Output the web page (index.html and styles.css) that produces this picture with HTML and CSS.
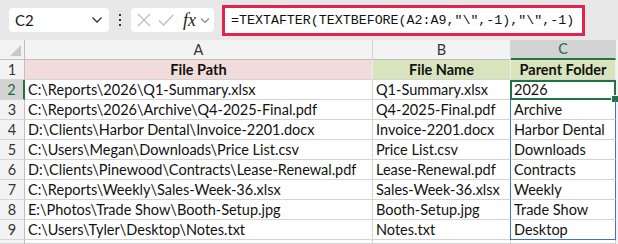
FILE: index.html
```html
<!DOCTYPE html>
<html lang="en">

<head>
    <meta charset="UTF-8">
    <meta name="viewport" content="width=device-width, initial-scale=1.0">
    <title>TEXTAFTER TEXTBEFORE</title>
    <link rel="stylesheet" href="styles.css">
</head>

<body>
    <div class="toolbar">
        <div class="namebox">
            <span class="name">C2</span>
            <svg class="chev" width="12" height="8" viewBox="0 0 12 8"><path d="M1.5 1.5 L6 6 L10.5 1.5" fill="none" stroke="#333" stroke-width="1.3"/></svg>
        </div>
        <div class="dots"><i></i><i></i><i></i></div>
        <div class="funcbox">
            <svg width="14" height="14" viewBox="0 0 14 14"><path d="M1 1 L13 13 M13 1 L1 13" stroke="#bdbdbd" stroke-width="1.3"/></svg>
            <svg width="16" height="14" viewBox="0 0 16 14"><path d="M1 7.5 L5.5 12 L15 2" fill="none" stroke="#bdbdbd" stroke-width="1.3"/></svg>
            <span class="fx">fx</span>
            <svg width="10" height="7" viewBox="0 0 10 7"><path d="M1 1.5 L5 5.5 L9 1.5" fill="none" stroke="#888" stroke-width="1.2"/></svg>
        </div>
        <div class="formula">=TEXTAFTER(TEXTBEFORE(A2:A9,"\",-1),"\",-1)</div>
    </div>

    <div class="sheet">
        <div class="corner"></div>
        <div class="colhead">A</div>
        <div class="colhead">B</div>
        <div class="colhead sel">C</div>
        <div class="edge"></div>

        <div class="rowhead">1</div>
        <div class="cell title pink">File Path</div>
        <div class="cell title green">File Name</div>
        <div class="cell title green">Parent Folder</div>
        <div class="edge"></div>

        <div class="rowhead sel">2</div>
        <div class="cell">C:\Reports\2026\Q1-Summary.xlsx</div>
        <div class="cell">Q1-Summary.xlsx</div>
        <div class="cell spill active">2026<span class="handle"></span></div>
        <div class="edge"></div>

        <div class="rowhead">3</div>
        <div class="cell">C:\Reports\2026\Archive\Q4-2025-Final.pdf</div>
        <div class="cell">Q4-2025-Final.pdf</div>
        <div class="cell spill">Archive</div>
        <div class="edge"></div>

        <div class="rowhead">4</div>
        <div class="cell">D:\Clients\Harbor Dental\Invoice-2201.docx</div>
        <div class="cell">Invoice-2201.docx</div>
        <div class="cell spill">Harbor Dental</div>
        <div class="edge"></div>

        <div class="rowhead">5</div>
        <div class="cell">C:\Users\Megan\Downloads\Price List.csv</div>
        <div class="cell">Price List.csv</div>
        <div class="cell spill">Downloads</div>
        <div class="edge"></div>

        <div class="rowhead">6</div>
        <div class="cell">D:\Clients\Pinewood\Contracts\Lease-Renewal.pdf</div>
        <div class="cell">Lease-Renewal.pdf</div>
        <div class="cell spill">Contracts</div>
        <div class="edge"></div>

        <div class="rowhead">7</div>
        <div class="cell">C:\Reports\Weekly\Sales-Week-36.xlsx</div>
        <div class="cell">Sales-Week-36.xlsx</div>
        <div class="cell spill">Weekly</div>
        <div class="edge"></div>

        <div class="rowhead">8</div>
        <div class="cell">E:\Photos\Trade Show\Booth-Setup.jpg</div>
        <div class="cell">Booth-Setup.jpg</div>
        <div class="cell spill">Trade Show</div>
        <div class="edge"></div>

        <div class="rowhead">9</div>
        <div class="cell">C:\Users\Tyler\Desktop\Notes.txt</div>
        <div class="cell">Notes.txt</div>
        <div class="cell spill last">Desktop</div>
        <div class="edge"></div>

        <div class="rowhead"></div>
        <div class="cell"></div>
        <div class="cell"></div>
        <div class="cell"></div>
        <div class="edge"></div>
    </div>
</body>

</html>
```

FILE: styles.css
```css
html,
body {
    margin: 0;
    padding: 0;
    background: #ffffff;
    overflow: hidden;
}

body {
    font-family: "Lato", "Liberation Sans", sans-serif;
    font-size: 14.5px;
    color: #111;
}

.toolbar {
    height: 40px;
    background: #e8e8e8;
    display: flex;
    align-items: center;
    padding-left: 9px;
    box-sizing: border-box;
}

.namebox {
    width: 100px;
    height: 24px;
    background: #fff;
    border-radius: 4px;
    display: flex;
    align-items: center;
    justify-content: space-between;
    padding: 0 6px 0 6px;
    box-sizing: border-box;
}

.name {
    color: #1a1a1a;
    font-size: 15px;
}

.dots {
    width: 22px;
    display: flex;
    flex-direction: column;
    align-items: center;
    gap: 3px;
}

.dots i {
    width: 2px;
    height: 2px;
    background: #333;
}

.funcbox {
    width: 83px;
    height: 24px;
    background: #fff;
    border-radius: 4px;
    display: flex;
    align-items: center;
    gap: 7px;
    padding-left: 6px;
    box-sizing: border-box;
}

.fx {
    font-family: "Liberation Serif", serif;
    font-style: italic;
    font-size: 18px;
    color: #222;
    margin-left: 2px;
    margin-right: -3px;
}

.formula {
    margin-left: 8px;
    width: 363px;
    height: 31px;
    background: #fff;
    border: 3px solid #e3224d;
    box-sizing: border-box;
    font-family: "Liberation Mono", monospace;
    font-size: 13.3px;
    line-height: 25px;
    padding-left: 6px;
    color: #111;
    white-space: nowrap;
}

.sheet {
    display: grid;
    grid-template-columns: 25px 348px 138px 105px 2px;
    grid-template-rows: repeat(10, 20px) 4px;
}

.corner {
    background: #f3f3f3;
    border-right: 1px solid #bfbfbf;
    border-bottom: 1px solid #bfbfbf;
    position: relative;
}

.corner::after {
    content: "";
    position: absolute;
    right: 3px;
    bottom: 3px;
    border-left: 11px solid transparent;
    border-bottom: 11px solid #c8c8c8;
}

.colhead {
    background: #f3f3f3;
    border-right: 1px solid #d6d6d6;
    border-bottom: 1px solid #bfbfbf;
    text-align: center;
    line-height: 19px;
    color: #333;
}

.colhead.sel {
    background: #d3d3d3;
    color: #1e6b41;
    border-bottom: 2px solid #217346;
    line-height: 18px;
}

.edge {
    background: #f3f3f3;
}

.rowhead {
    background: #f3f3f3;
    border-right: 1px solid #bfbfbf;
    border-bottom: 1px solid #d6d6d6;
    text-align: center;
    line-height: 19px;
    color: #333;
}

.rowhead.sel {
    background: #d3d3d3;
    color: #1e6b41;
    border-right: 2px solid #217346;
}

.cell {
    border-right: 1px solid #d4d4d4;
    border-bottom: 1px solid #d4d4d4;
    padding-left: 3px;
    line-height: 19px;
    white-space: nowrap;
    overflow: visible;
    position: relative;
}

.title {
    font-weight: bold;
    text-align: center;
    padding-left: 0;
}

.pink {
    background: #f2dcdb;
    border-right-color: #eeeeee;
}

.green {
    background: #d8e4bc;
    border-right-color: #eeeeee;
}

.spill {
    border-left: 1px solid #4472c4;
    border-right: 1px solid #4472c4;
    margin-left: -1px;
}

.spill.last {
    border-bottom: 1px solid #4472c4;
}

.active {
    border: 2px solid #217346;
    line-height: 16px;
    padding-left: 2px;
}

.handle {
    position: absolute;
    right: -5px;
    bottom: -5px;
    width: 6px;
    height: 6px;
    background: #217346;
    border: 1px solid #fff;
}
```
